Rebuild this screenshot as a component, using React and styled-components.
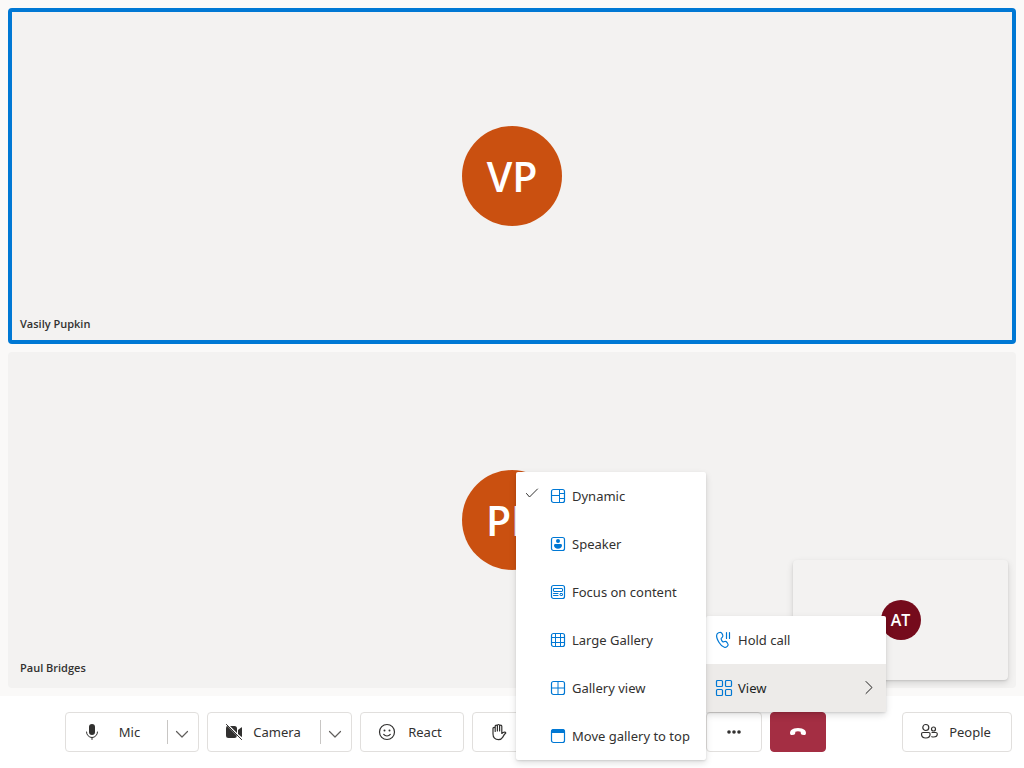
import React from "react";
import styled, { createGlobalStyle } from "styled-components";

const GlobalStyle = createGlobalStyle`
  *, *::before, *::after { box-sizing: border-box; }
  body {
    margin: 0;
    background: #ffffff;
    color: #323130;
    font-family: "Noto Sans", "Open Sans", sans-serif;
    font-size: 13px;
    line-height: 20px;
  }
  button { font: inherit; color: inherit; cursor: pointer; }
`;

const Page = styled.div`
  display: flex;
  flex-direction: column;
  min-height: 100vh;
`;

const Stage = styled.main`
  position: relative;
  flex: 1;
  display: grid;
  grid-template-rows: 1fr 1fr;
  gap: 8px;
  padding: 8px;
  background: #faf9f8;
`;

const Tile = styled.section`
  position: relative;
  display: flex;
  align-items: center;
  justify-content: center;
  border: 4px solid ${(p) => (p.$speaking ? "#0078d4" : "transparent")};
  border-radius: 4px;
  background: #f3f2f1;
`;

const TileName = styled.span`
  position: absolute;
  left: 8px;
  bottom: 8px;
  font-family: "Open Sans", sans-serif;
  font-size: 11px;
  line-height: 16px;
  font-weight: 600;
`;

const Avatar = styled.div`
  display: flex;
  align-items: center;
  justify-content: center;
  width: ${(p) => p.$size}px;
  height: ${(p) => p.$size}px;
  border-radius: 50%;
  background: ${(p) => p.$color};
  color: #ffffff;
  font-family: "Open Sans", sans-serif;
  font-size: ${(p) => (p.$size > 50 ? 41 : 16)}px;
  line-height: 1;
  font-weight: 600;
`;

const LocalPreview = styled.aside`
  position: absolute;
  right: 16px;
  bottom: 16px;
  display: flex;
  align-items: center;
  justify-content: center;
  width: 215px;
  height: 120px;
  border-radius: 4px;
  background: #f3f2f1;
  box-shadow: 0 3px 7px rgba(0, 0, 0, 0.13), 0 1px 2px rgba(0, 0, 0, 0.11);
`;

const ControlBar = styled.footer`
  display: flex;
  align-items: center;
  gap: 11px;
  padding: 16px 12px 16px 0;
  background: #ffffff;
`;

const CallControls = styled.div`
  flex: 1;
  display: flex;
  justify-content: center;
  gap: 8px;
`;

const ControlButton = styled.button`
  display: flex;
  align-items: center;
  justify-content: ${(p) => (p.$centered ? "center" : "flex-start")};
  width: ${(p) => p.$width}px;
  height: 40px;
  padding: ${(p) => (p.$centered ? "0" : "0 16px")};
  border: 1px solid ${(p) => (p.$danger ? "#a42e43" : "#e1dfdd")};
  border-radius: 4px;
  background: ${(p) => (p.$danger ? "#a42e43" : "#ffffff")};
  color: ${(p) => (p.$danger ? "#ffffff" : "#323130")};
`;

const SplitControl = styled.div`
  display: flex;
  align-items: center;
  width: ${(p) => p.$width}px;
  height: 40px;
  border: 1px solid #e1dfdd;
  border-radius: 4px;
  background: #ffffff;
`;

const SplitMain = styled.button`
  flex: 1;
  display: flex;
  align-items: center;
  height: 24px;
  padding: 0 16px;
  border: 0;
  border-right: 1px solid #c8c6c4;
  background: transparent;
`;

const SplitArrow = styled.button`
  display: flex;
  align-items: center;
  justify-content: center;
  width: 30px;
  height: 24px;
  padding: 0;
  border: 0;
  background: transparent;
  color: #605e5c;
`;

const ControlLabel = styled.span`
  flex: 1;
  margin-left: 6px;
  text-align: center;
`;

const MenuAnchor = styled.div`
  position: relative;
`;

const Menu = styled.div`
  position: absolute;
  left: 0;
  bottom: 100%;
  z-index: 2;
  width: 180px;
  border-radius: 2px;
  background: #ffffff;
  box-shadow: 0 3px 7px rgba(0, 0, 0, 0.13), 0 1px 2px rgba(0, 0, 0, 0.11);
`;

const SubMenu = styled(Menu)`
  left: auto;
  right: 100%;
  bottom: -48px;
  z-index: 3;
  width: 190px;
`;

const MenuItem = styled.button`
  display: flex;
  align-items: center;
  gap: 4px;
  width: 100%;
  height: 48px;
  padding: 0 8px;
  border: 0;
  background: ${(p) => (p.$active ? "#edebe9" : "transparent")};
  color: ${(p) => (p.$active ? "#201f1e" : "#323130")};
  text-align: left;
  white-space: nowrap;
`;

const MenuLabel = styled.span`
  flex: 1;
`;

const CheckSlot = styled.span`
  display: flex;
  justify-content: center;
  width: 20px;
  height: 20px;
`;

const Glyph = styled.svg`
  display: block;
  flex: none;
  width: 20px;
  height: 20px;
  fill: none;
  stroke: currentColor;
  stroke-width: 1px;
  stroke-linecap: round;
  stroke-linejoin: round;
  color: ${(p) => (p.$accent ? "#0078d4" : "inherit")};
  .solid { fill: currentColor; stroke: none; }
  .heavy { stroke-width: 1.2; }
`;

function Icon({ accent, children }) {
  return (
    <Glyph viewBox="0 0 20 20" $accent={accent} aria-hidden="true">
      {children}
    </Glyph>
  );
}

const Frame = () => (
  <rect className="heavy" x="3.5" y="3.5" width="13" height="13" rx="2" />
);

const MicIcon = () => (
  <Icon>
    <rect className="solid" x="7" y="2" width="6" height="11" rx="3" />
    <path d="M4.5 10a5.5 5.5 0 0 0 11 0M10 15.5V17.5" />
  </Icon>
);

const CameraOffIcon = () => (
  <Icon>
    <path className="solid" d="M6 4H10.500A2.500 2.500 0 0 1 13 6.500V11zM3 3.800 12.900 13.700A2.500 2.500 0 0 1 10.500 16h-6A2.500 2.500 0 0 1 2 13.500v-7c0-.900.400-2 1-2.700zM14 7.900l3.200-2.500c.300-.250.800 0 .800.400v8.400c0 .400-.200.600-.400.900L14 12z" />
    <path d="m2.4 2.4 15.2 15.2" />
  </Icon>
);

const SmileIcon = () => (
  <Icon>
    <circle className="heavy" cx="10" cy="10" r="7.5" />
    <circle className="solid" cx="7.5" cy="8.5" r="1" />
    <circle className="solid" cx="12.5" cy="8.5" r="1" />
    <path className="heavy" d="M6.700 12.400a4.200 4.200 0 0 0 6.600 0" />
  </Icon>
);

const HandIcon = () => (
  <Icon>
    <path className="heavy" d="M6.200 9.500V4.200a1.100 1.100 0 0 1 2.200 0V9M8.400 9V3.600a1.100 1.100 0 0 1 2.200 0V9M10.600 9V4.200a1.100 1.100 0 0 1 2.200 0v7.300c1-1 2-1.500 3.200-1.300.900.200 1 .900.300 1.400-1.300 1-1.700 2.200-2.500 3.500-1 1.700-2.200 2.500-4.300 2.500-3.400 0-5.500-2-5.500-5.600V6.400a1.100 1.100 0 0 1 2.200 0v3" />
  </Icon>
);

const ShareIcon = () => (
  <Icon>
    <rect x="2.5" y="4.5" width="15" height="11" rx="1.5" />
    <path d="M10 13V7M7.5 9.5 10 7l2.5 2.5" />
  </Icon>
);

const MoreIcon = () => (
  <Icon>
    <circle className="solid" cx="5" cy="10" r="1.8" />
    <circle className="solid" cx="10" cy="10" r="1.8" />
    <circle className="solid" cx="15" cy="10" r="1.8" />
  </Icon>
);

const EndCallIcon = () => (
  <Icon>
    <path className="solid" d="M10 6c3 0 5.300.700 6.700 2.100 1 1 1.500 2.300 1.200 3.600-.200.900-1 1.500-1.900 1.300l-1.900-.300c-.700-.150-1.200-.700-1.300-1.400l-.200-1.600C11.800 9.400 10.900 9.200 10 9.200s-1.800.200-2.600.500l-.200 1.600c-.100.700-.600 1.250-1.300 1.400L4 13c-.900.200-1.700-.400-1.900-1.300-.300-1.300.200-2.600 1.200-3.600C4.700 6.700 7 6 10 6z" />
  </Icon>
);

const PeopleIcon = () => (
  <Icon>
    <g className="heavy">
      <circle cx="6.800" cy="5.500" r="3" />
      <circle cx="14.500" cy="7" r="2" />
      <path d="M4 10.500h5.600a1.500 1.500 0 0 1 1.500 1.500c0 2.300-1.700 4-4.300 4s-4.300-1.700-4.300-4A1.500 1.500 0 0 1 4 10.500zM13 10.500h4A1.500 1.500 0 0 1 18.300 12c0 1.800-1.500 3-3.700 3-.700 0-1.300-.100-1.800-.300" />
    </g>
  </Icon>
);

const ChevronDown = () => (
  <Icon>
    <path className="heavy" d="M3.500 9.500 9 15l5.500-5.500" />
  </Icon>
);

const ChevronRight = () => (
  <Icon>
    <path d="m8 3.500 6 6-6 6" />
  </Icon>
);

const CheckIcon = () => (
  <Icon>
    <path d="m2.500 7.500 3 3.500L13.500 3" />
  </Icon>
);

const HoldIcon = () => (
  <Icon accent>
    <path className="heavy" d="m4.600 2.800 1-.300A2 2 0 0 1 8 3.600l.700 1.500a2 2 0 0 1-.500 2.300l-1 1c-.300.300 0 1.200.600 2.200.500.900 1.100 1.400 1.500 1.300l1.400-.400a2 2 0 0 1 2.200.800l.800 1.200a2 2 0 0 1-.200 2.600l-.600.600a2.600 2.600 0 0 1-2.600.600c-2-.600-3.800-2.300-5.400-5C3.200 9.400 2.300 6.900 2.700 5a2.800 2.800 0 0 1 1.900-2.200zM12.500 2.500v6M15.500 2.500v6" />
  </Icon>
);

const ViewIcon = () => (
  <Icon accent>
    <g className="heavy">
      <rect x="2.500" y="2.500" width="6" height="6" rx="1" />
      <rect x="11.500" y="2.500" width="6" height="6" rx="1" />
      <rect x="2.500" y="11.500" width="6" height="6" rx="1" />
      <rect x="11.500" y="11.500" width="6" height="6" rx="1" />
    </g>
  </Icon>
);

const DynamicIcon = () => (
  <Icon accent>
    <Frame />
    <path d="M11.5 3.5v13M3.5 9.5h8M11.5 7.5h5M11.5 12.5h5" />
  </Icon>
);

const SpeakerIcon = () => (
  <Icon accent>
    <Frame />
    <circle className="solid" cx="10" cy="7" r="2" />
    <path className="solid" d="M7.300 10h5.400c.700 0 1.300.600 1.300 1.300 0 2-1.700 3.400-4 3.400s-4-1.400-4-3.400c0-.700.600-1.300 1.300-1.300z" />
  </Icon>
);

const FocusIcon = () => (
  <Icon accent>
    <Frame />
    <rect x="5.5" y="6.5" width="9" height="3" rx="0.5" />
    <path d="M5.5 11.500h4.5M5.5 13.5h4.5" />
    <rect x="12" y="11.500" width="2.5" height="2" rx="0.5" />
  </Icon>
);

const LargeGalleryIcon = () => (
  <Icon accent>
    <Frame />
    <path d="M7.5 3.5v13M12.5 3.5v13M3.5 7.5h13M3.5 12.5h13" />
  </Icon>
);

const GalleryIcon = () => (
  <Icon accent>
    <Frame />
    <path d="M10 3.5v13M3.5 10h13" />
  </Icon>
);

const GalleryTopIcon = () => (
  <Icon accent>
    <Frame />
    <path className="solid" d="M3 7V5.500A2.500 2.500 0 0 1 5.500 3h9A2.500 2.500 0 0 1 17 5.500V7z" />
  </Icon>
);

const layouts = [
  { label: "Dynamic", Glyph: DynamicIcon, checked: true },
  { label: "Speaker", Glyph: SpeakerIcon },
  { label: "Focus on content", Glyph: FocusIcon },
  { label: "Large Gallery", Glyph: LargeGalleryIcon },
  { label: "Gallery view", Glyph: GalleryIcon },
  { label: "Move gallery to top", Glyph: GalleryTopIcon },
];

const participants = [
  { name: "Vasily Pupkin", initials: "VP", speaking: true },
  { name: "Paul Bridges", initials: "PB" },
];

export default function App() {
  return (
    <Page>
      <GlobalStyle />
      <Stage>
        {participants.map((p) => (
          <Tile key={p.name} $speaking={p.speaking}>
            <Avatar $size={100} $color="#ca5010">{p.initials}</Avatar>
            <TileName>{p.name}</TileName>
          </Tile>
        ))}
        <LocalPreview>
          <Avatar $size={40} $color="#750b1c">AT</Avatar>
        </LocalPreview>
      </Stage>

      <ControlBar>
        <CallControls>
          <SplitControl $width={134}>
            <SplitMain type="button"><MicIcon /><ControlLabel>Mic</ControlLabel></SplitMain>
            <SplitArrow type="button" aria-label="Microphone options"><ChevronDown /></SplitArrow>
          </SplitControl>
          <SplitControl $width={145}>
            <SplitMain type="button"><CameraOffIcon /><ControlLabel>Camera</ControlLabel></SplitMain>
            <SplitArrow type="button" aria-label="Camera options"><ChevronDown /></SplitArrow>
          </SplitControl>
          <ControlButton type="button" $width={104}>
            <SmileIcon /><ControlLabel>React</ControlLabel>
          </ControlButton>
          <ControlButton type="button" $width={104} aria-label="Raise hand"><HandIcon /></ControlButton>
          <ControlButton type="button" $width={114} aria-label="Share screen"><ShareIcon /></ControlButton>
          <MenuAnchor>
            <ControlButton type="button" $width={56} $centered aria-label="More" aria-haspopup="menu" aria-expanded="true">
              <MoreIcon />
            </ControlButton>
            <Menu role="menu" aria-label="More">
              <MenuItem type="button" role="menuitem"><HoldIcon /><MenuLabel>Hold call</MenuLabel></MenuItem>
              <MenuItem type="button" role="menuitem" $active aria-haspopup="menu" aria-expanded="true">
                <ViewIcon /><MenuLabel>View</MenuLabel><ChevronRight />
              </MenuItem>
              <SubMenu role="menu" aria-label="View">
                {layouts.map(({ label, Glyph: LayoutIcon, checked }) => (
                  <MenuItem key={label} type="button" role="menuitemradio" aria-checked={!!checked}>
                    <CheckSlot>{checked && <CheckIcon />}</CheckSlot>
                    <LayoutIcon />
                    <MenuLabel>{label}</MenuLabel>
                  </MenuItem>
                ))}
              </SubMenu>
            </Menu>
          </MenuAnchor>
          <ControlButton type="button" $width={56} $centered $danger aria-label="Leave call"><EndCallIcon /></ControlButton>
        </CallControls>
        <ControlButton type="button" $width={110}>
          <PeopleIcon /><ControlLabel>People</ControlLabel>
        </ControlButton>
      </ControlBar>
    </Page>
  );
}
